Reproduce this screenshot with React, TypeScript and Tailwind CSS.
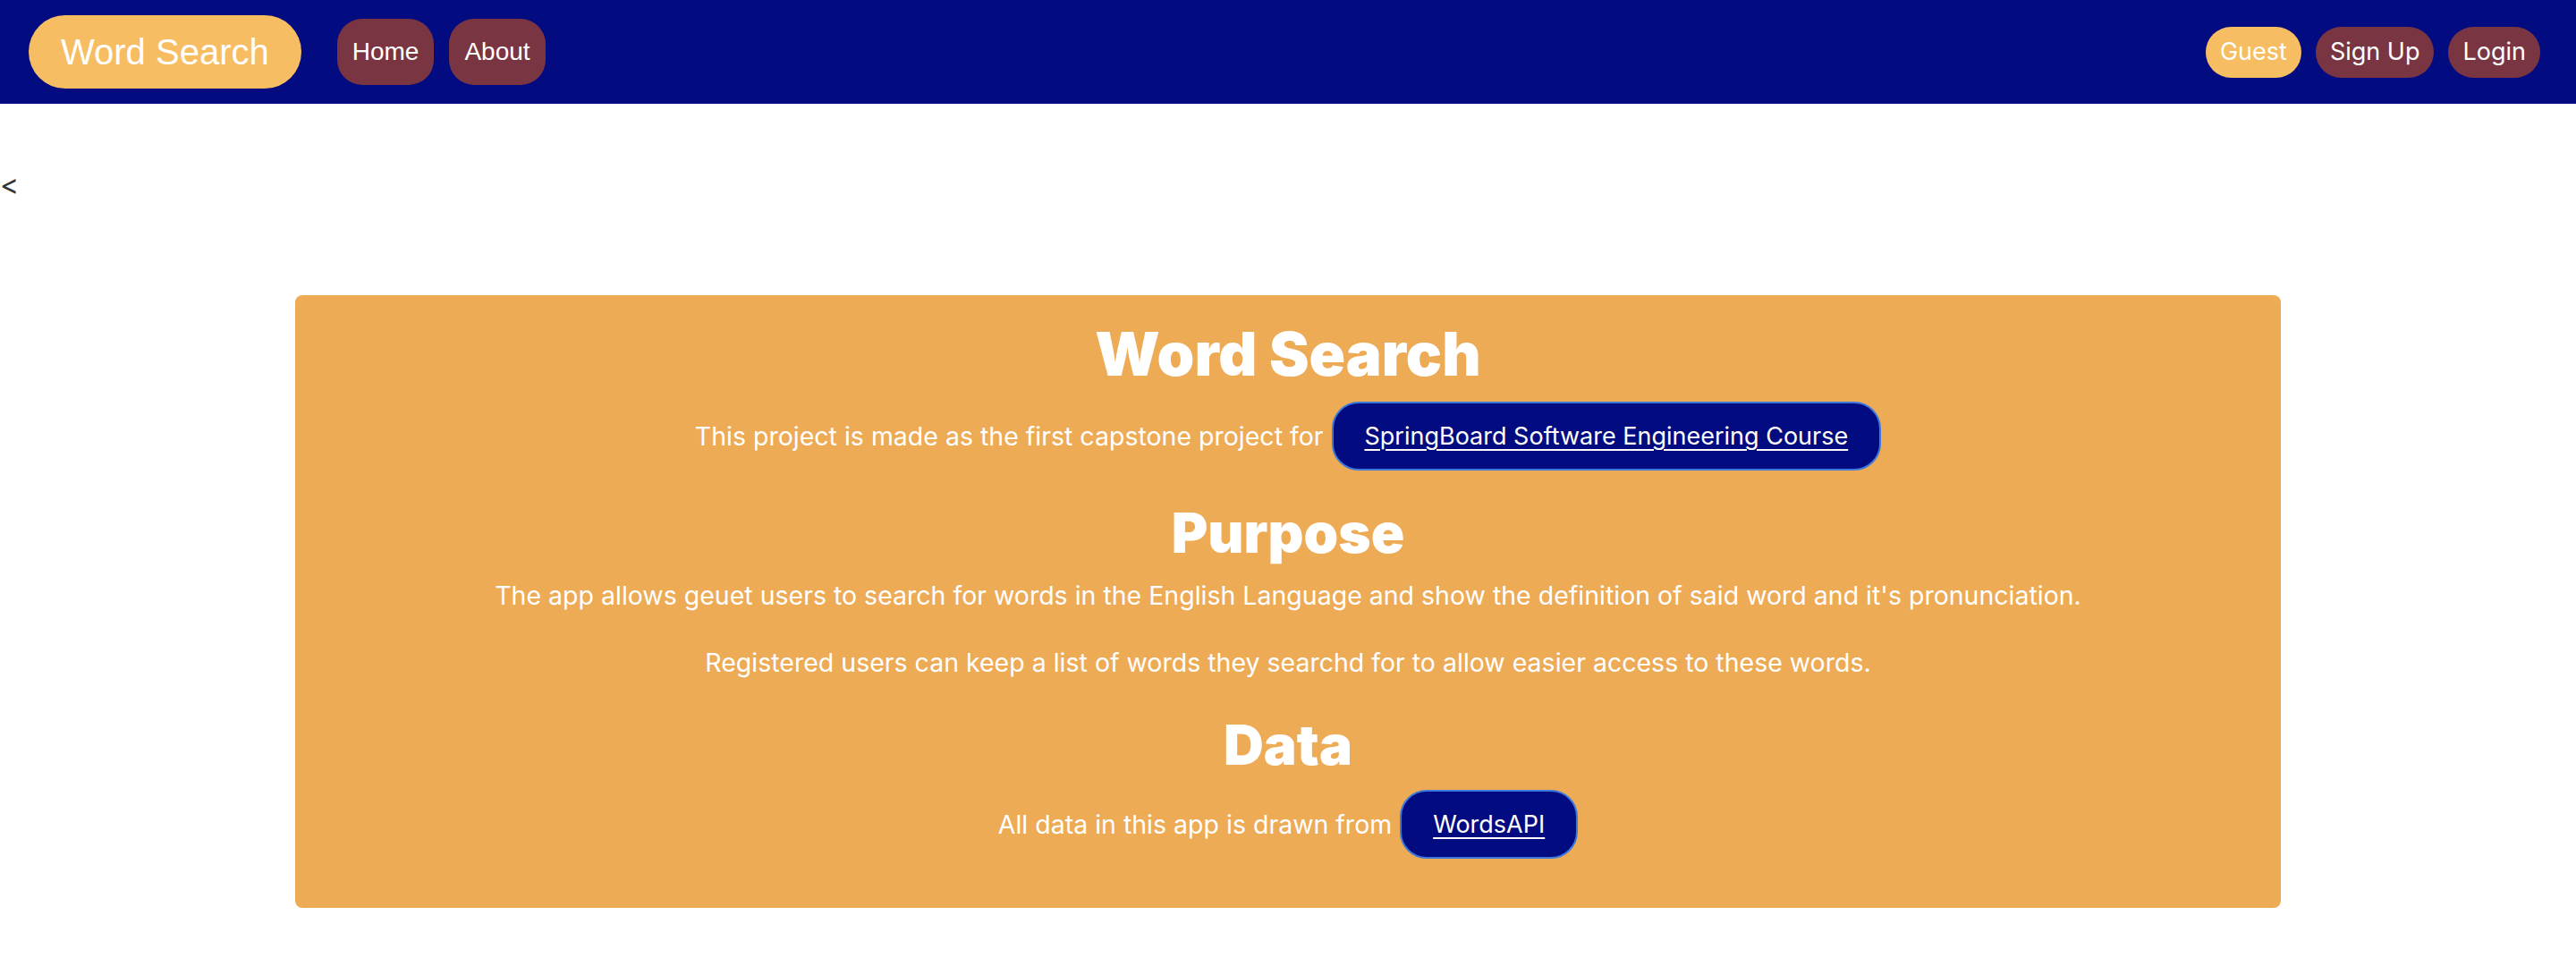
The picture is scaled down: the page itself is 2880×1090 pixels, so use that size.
import React from 'react'

const sans = "font-['Inter','Noto_Sans',sans-serif]"

function NavPill({ label, tall }: { label: string; tall?: boolean }) {
    return (
        <a
            href="#"
            className={
                tall
                    ? "flex h-[74px] items-center rounded-[28px] bg-[#7a3543] px-[17px] text-[28px] text-white font-['Liberation_Sans',Arial,sans-serif]"
                    : "flex h-[57px] items-center rounded-full bg-[#7a3543] px-[16px] text-[27px] text-white"
            }
        >
            {label}
        </a>
    )
}

function LinkButton({ label }: { label: string }) {
    return (
        <a
            href="#"
            className="flex h-[77px] items-center rounded-[30px] border-2 border-[#3d78dc] bg-[#030b80] px-[35px] text-[27px] text-white underline decoration-2 underline-offset-[5px]"
        >
            {label}
        </a>
    )
}

export default function App() {
    return (
        <div className={`min-h-screen bg-white ${sans}`}>
            {/* top bar */}
            <nav className="flex h-[116px] items-center justify-between bg-[#030b80] pl-[32px] pr-[40px]">
                <div className="flex items-center">
                    <a
                        href="#"
                        className="flex h-[82px] items-center rounded-full bg-[#f7bd62] px-[36px] text-[40px] text-white font-['Liberation_Sans',Arial,sans-serif]"
                    >
                        Word Search
                    </a>
                    <div className="ml-[40px] flex items-center gap-[17px]">
                        <NavPill label="Home" tall />
                        <NavPill label="About" tall />
                    </div>
                </div>
                <div className="flex items-center gap-[16px]">
                    <a href="#" className="flex h-[57px] items-center rounded-full bg-[#f7bd62] px-[16px] text-[27px] text-white">
                        Guest
                    </a>
                    <NavPill label="Sign Up" />
                    <NavPill label="Login" />
                </div>
            </nav>

            <div className="mt-[73px] text-[32px] leading-[36px] text-[#333]">&lt;</div>

            {/* about card */}
            <section className="mx-auto mt-[105px] w-[2220px] rounded-lg bg-[#eeab56] pt-[26px] pb-[55px] text-center text-white">
                <h1 className="text-[67px] font-black leading-[79px]">Word Search</h1>
                <div className="mt-[14px] flex items-center justify-center gap-[9px] text-[28.5px] leading-[45px]">
                    <span>This project is made as the first capstone project for</span>
                    <LinkButton label="SpringBoard Software Engineering Course" />
                </div>

                <h2 className="mt-[30px] text-[62px] font-black leading-[79px]">Purpose</h2>
                <p className="mt-[8px] text-[28.5px] leading-[45px]">
                    The app allows geuet users to search for words in the English Language and show the definition of said word and it's pronunciation.
                </p>
                <p className="mt-[30px] text-[28.5px] leading-[45px]">
                    Registered users can keep a list of words they searchd for to allow easier access to these words.
                </p>

                <h2 className="mt-[30px] text-[62px] font-black leading-[79px]">Data</h2>
                <div className="mt-[11px] flex items-center justify-center gap-[9px] text-[28.5px] leading-[45px]">
                    <span>All data in this app is drawn from</span>
                    <LinkButton label="WordsAPI" />
                </div>
            </section>
        </div>
    )
}
